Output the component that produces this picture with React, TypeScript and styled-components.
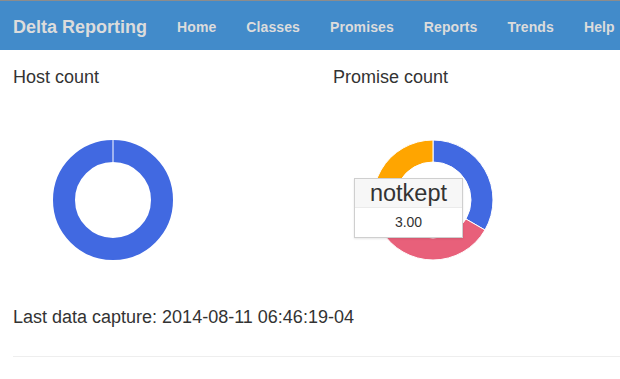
import styled, { createGlobalStyle } from 'styled-components'

const GlobalStyle = createGlobalStyle`
	body {
		margin: 0;
		overflow: hidden;
		background: #fff;
		font-family: 'Liberation Sans', Arial, Helvetica, sans-serif;
		color: #333;
	}
`

type TSlice = {
	label: string
	value: number
	color: string
}

const NAV_LINKS = ['Home', 'Classes', 'Promises', 'Reports', 'Trends', 'Help']

const hostData: TSlice[] = [{ label: 'hosts', value: 1, color: '#4169e1' }]

const promiseData: TSlice[] = [
	{ label: 'kept', value: 3, color: '#4169e1' },
	{ label: 'repaired', value: 3, color: '#e8607a' },
	{ label: 'notkept', value: 3, color: '#ffa500' },
]

// точка на окружности, угол от верха по часовой
const point = (r: number, a: number) => {
	const x = 100 + r * Math.sin(a)
	const y = 100 - r * Math.cos(a)
	return `${x.toFixed(2)} ${y.toFixed(2)}`
}

const arcPath = (start: number, end: number, R: number, r: number) => {
	const large = end - start > Math.PI ? 1 : 0
	return [
		`M ${point(R, start)}`,
		`A ${R} ${R} 0 ${large} 1 ${point(R, end)}`,
		`L ${point(r, end)}`,
		`A ${r} ${r} 0 ${large} 0 ${point(r, start)}`,
		'Z',
	].join(' ')
}

const Doughnut = ({ data }: { data: TSlice[] }) => {
	const total = data.reduce((s, d) => s + d.value, 0)
	const R = 60
	const r = 38
	let angle = 0

	return (
		<svg width='200' height='200' viewBox='0 0 200 200'>
			{data.length === 1 ? (
				<>
					<circle cx='100' cy='100' r={(R + r) / 2} fill='none' stroke={data[0].color} strokeWidth={R - r} />
					<line x1='100' y1={100 - R} x2='100' y2={100 - r} stroke='#fff' strokeWidth='1' />
				</>
			) : (
				data.map(d => {
					const start = angle
					angle += (d.value / total) * Math.PI * 2
					return (
						<path
							key={d.label}
							d={arcPath(start, angle, R, r)}
							fill={d.color}
							stroke='#fff'
							strokeWidth='1'
						/>
					)
				})
			)}
		</svg>
	)
}

const App = () => {
	return (
		<>
			<GlobalStyle />
			<Navbar>
				<Brand>Delta Reporting</Brand>
				<NavList>
					{NAV_LINKS.map(link => (
						<NavLink key={link}>{link}</NavLink>
					))}
				</NavList>
			</Navbar>
			<Main>
				<Row>
					<Column>
						<Title>Host count</Title>
						<ChartBox>
							<Doughnut data={hostData} />
						</ChartBox>
					</Column>
					<Column>
						<Title>Promise count</Title>
						<ChartBox>
							<Doughnut data={promiseData} />
							<Tooltip>
								<TooltipTitle>notkept</TooltipTitle>
								<TooltipValue>3.00</TooltipValue>
							</Tooltip>
						</ChartBox>
					</Column>
				</Row>
				<Capture>Last data capture: 2014-08-11 06:46:19-04</Capture>
				<Divider />
			</Main>
		</>
	)
}

export default App

const Navbar = styled.nav`
	display: flex;
	height: 49px;
	border-top: 1px solid #8c8c8c;
	background-color: #428bca;
	overflow: hidden;
	white-space: nowrap;
`

const Brand = styled.a`
	padding: 16px 15px 0 13px;
	font-size: 18px;
	line-height: 20px;
	font-weight: bold;
	color: #dcdcdc;
`

const NavList = styled.ul`
	display: flex;
	margin: 0;
	padding: 0;
	list-style: none;
`

const NavLink = styled.li`
	padding: 16px 15px 0;
	font-size: 14px;
	line-height: 20px;
	font-weight: bold;
	letter-spacing: 0.1px;
	color: #dcdcdc;
`

const Main = styled.main`
	width: 700px;
	padding-left: 13px;
`

const Row = styled.div`
	display: grid;
	grid-template-columns: 320px 320px;
`

const Column = styled.section`
	display: flex;
	flex-direction: column;
`

const Title = styled.h4`
	margin: 17px 0 0;
	font-size: 18px;
	line-height: 20px;
	font-weight: normal;
`

const ChartBox = styled.div`
	position: relative;
	width: 200px;
	height: 200px;
	margin-top: 13px;

	svg {
		display: block;
	}
`

const Tooltip = styled.div`
	position: absolute;
	left: 21px;
	top: 78px;
	width: 107px;
	border: 1px solid #cfcfcf;
	background: #fff;
	box-shadow: 0 1px 2px rgba(0, 0, 0, 0.1);
	text-align: center;
	color: #333;
`

const TooltipTitle = styled.div`
	height: 28px;
	background: #f7f7f7;
	border-bottom: 1px solid #ebebeb;
	font-size: 23.5px;
	line-height: 28px;
`

const TooltipValue = styled.div`
	height: 29px;
	padding-top: 4px;
	box-sizing: border-box;
	font-size: 14px;
	line-height: 20px;
`

const Capture = styled.p`
	margin: 7px 0 0;
	font-size: 18px;
	line-height: 20px;
`

const Divider = styled.hr`
	margin: 29px 0 0;
	border: 0;
	border-top: 1px solid #eee;
`
